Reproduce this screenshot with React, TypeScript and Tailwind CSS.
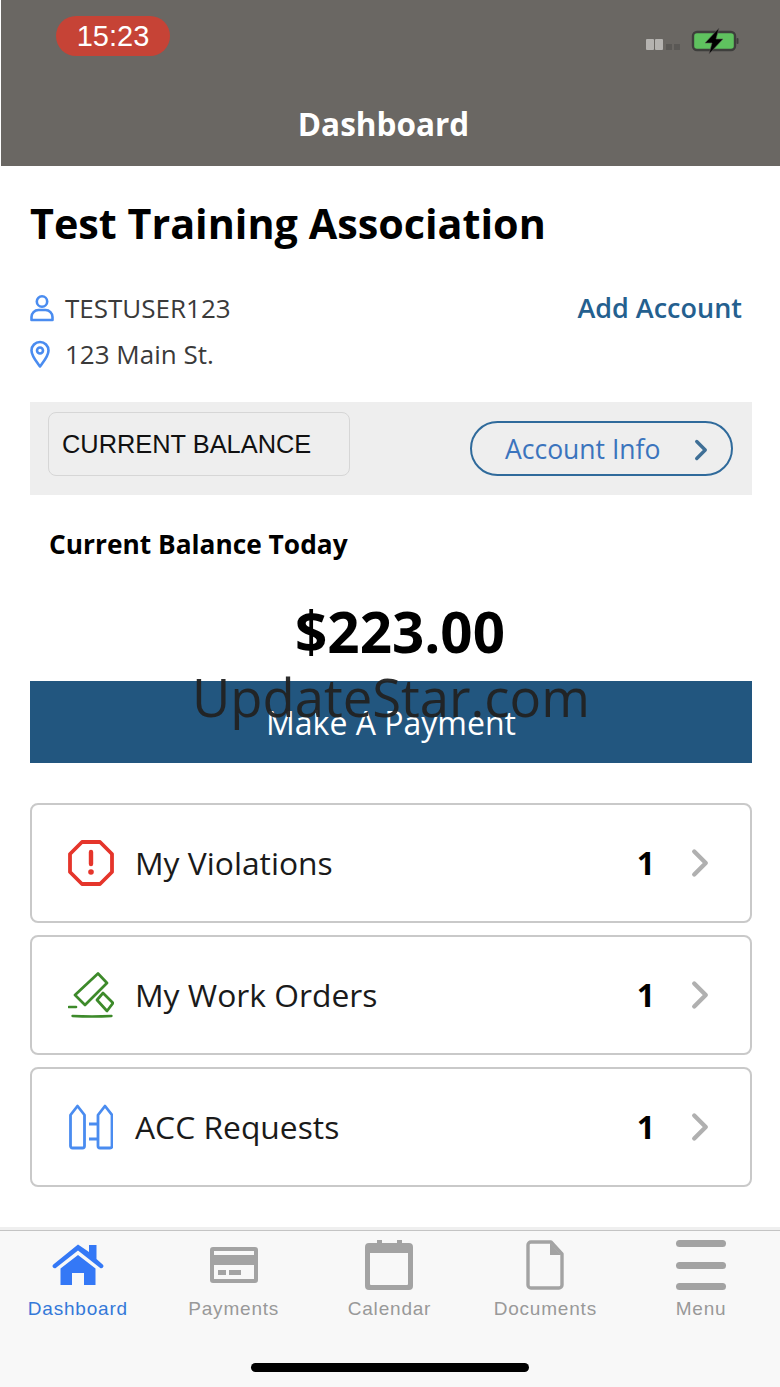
import { ChevronRight } from "lucide-react";

const openSans = "font-['Open_Sans',sans-serif]";

function UserIcon() {
  return (
    <svg width="24" height="28" viewBox="0 0 24 28" fill="none" stroke="#4a8cf0" strokeWidth="2.6">
      <circle cx="12" cy="7.5" r="5.2" />
      <path d="M1.5 26v-3a7 7 0 0 1 7-7h7a7 7 0 0 1 7 7v3z" strokeLinejoin="round" />
    </svg>
  );
}

function PinIcon() {
  return (
    <svg width="20" height="28" viewBox="0 0 20 28" fill="none" stroke="#4a8cf0" strokeWidth="2.6">
      <path d="M10 26.5C6 21 1.5 16 1.5 10.5a8.5 8.5 0 0 1 17 0C18.5 16 14 21 10 26.5z" strokeLinejoin="round" />
      <circle cx="10" cy="10.5" r="3" />
    </svg>
  );
}

function OctagonIcon() {
  return (
    <svg width="46" height="46" viewBox="0 0 46 46" fill="none">
      <path d="M14 2h18l12 12v18L32 44H14L2 32V14z" stroke="#e5352b" strokeWidth="3.8" strokeLinejoin="round" />
      <path d="M23 12v12" stroke="#e5352b" strokeWidth="4.4" strokeLinecap="round" />
      <circle cx="23" cy="32" r="2.8" fill="#e5352b" />
    </svg>
  );
}

function GavelIcon() {
  return (
    <svg width="46" height="46" viewBox="0 0 46 46" fill="none" stroke="#3d8a2a" strokeWidth="2.7" strokeLinejoin="round">
      <path d="M30 1.500l9 9.500-22 22-10-10z" />
      <path d="M29 28l6-7 10 10-6 8z" />
      <path d="M1 35h7" strokeLinecap="round" strokeWidth="2.600" />
      <path d="M4.500 44q19.500 1 39 0" strokeWidth="2.400" strokeLinecap="round" />
    </svg>
  );
}

function FenceIcon() {
  return (
    <svg width="44" height="46" viewBox="0 0 44 46" fill="none" stroke="#4a8cf0" strokeWidth="2.8" strokeLinejoin="round">
      <path d="M1.500 11L8.500 2l7 9v31a2 2 0 0 1-2 2h-10a2 2 0 0 1-2-2z" />
      <path d="M29 11l7-9 7 9v31a2 2 0 0 1-2 2H31a2 2 0 0 1-2-2z" />
      <path d="M20 20h9M20 35h9" />
    </svg>
  );
}

function HomeIcon() {
  return (
    <svg width="52" height="42" viewBox="0 0 52 42" fill="#3478f6">
      <path d="M26 .500L37 8V1h7.500v14l6.200 5.400c1 .9 1 2.200.2 3.100-.8.900-2 1-3 .2L26 6.500 4.100 23.700c-1 .8-2.200.7-3-.2-.8-.9-.8-2.200.2-3.100z" />
      <path d="M26 11L43.500 24.500V41H32V29H20v12H8.500V24.500z" />
    </svg>
  );
}

function CardIcon() {
  return (
    <svg width="48" height="36" viewBox="0 0 48 36" fill="#a3a3a3">
      <path fillRule="evenodd" d="M3 0h42a3 3 0 0 1 3 3v30a3 3 0 0 1-3 3H3a3 3 0 0 1-3-3V3a3 3 0 0 1 3-3zM4 4v4h40V4zM4 18v14h40V18z" />
      <rect x="8" y="23" width="8" height="5" />
      <rect x="19" y="23" width="12" height="5" />
    </svg>
  );
}

function CalendarIcon() {
  return (
    <svg width="48" height="50" viewBox="0 0 48 50" fill="#a3a3a3">
      <path fillRule="evenodd" d="M4 3h8V0h5v3h15V0h5v3h7a4 4 0 0 1 4 4v39a4 4 0 0 1-4 4H4a4 4 0 0 1-4-4V7a4 4 0 0 1 4-4zM5 13v31a1 1 0 0 0 1 1h36a1 1 0 0 0 1-1V13z" />
    </svg>
  );
}

function DocIcon() {
  return (
    <svg width="38" height="50" viewBox="0 0 38 50" fill="none">
      <path d="M5 2h20l11 12v31a3 3 0 0 1-3 3H5a3 3 0 0 1-3-3V5a3 3 0 0 1 3-3z" stroke="#a3a3a3" strokeWidth="3.400" strokeLinejoin="round" />
      <path d="M24 3v12h11z" fill="#a3a3a3" />
    </svg>
  );
}

function MenuIcon() {
  return (
    <div className="flex h-[50px] w-[50px] flex-col justify-between">
      <div className="h-[7px] rounded-full bg-[#a3a3a3]" />
      <div className="h-[7px] rounded-full bg-[#a3a3a3]" />
      <div className="h-[7px] rounded-full bg-[#a3a3a3]" />
    </div>
  );
}

function BatteryIcon() {
  return (
    <svg width="50" height="26" viewBox="0 0 50 26" fill="none">
      <rect x="2" y="4" width="42" height="18" rx="4" fill="#5fc25f" stroke="#3e3e3c" strokeWidth="2.400" />
      <rect x="45.500" y="10" width="2" height="6" rx="1" fill="#3e3e3c" />
      <path d="M28 0L14 15h7l-3 11 14-15h-7z" fill="#000" stroke="#5a5855" strokeWidth=".6" />
    </svg>
  );
}

const rows = [
  { label: "My Violations", count: 1, icon: <OctagonIcon /> },
  { label: "My Work Orders", count: 1, icon: <GavelIcon /> },
  { label: "ACC Requests", count: 1, icon: <FenceIcon /> },
];

const tabs = [
  { label: "Dashboard", icon: <HomeIcon />, active: true },
  { label: "Payments", icon: <CardIcon />, active: false },
  { label: "Calendar", icon: <CalendarIcon />, active: false },
  { label: "Documents", icon: <DocIcon />, active: false },
  { label: "Menu", icon: <MenuIcon />, active: false },
];

export default function App() {
  return (
    <div className={`flex h-[1387px] w-[780px] flex-col overflow-hidden bg-white ${openSans}`}>
      {/* Nav bar */}
      <div className="ml-px h-[166px] shrink-0 bg-[#6a6763] pt-4 pl-[55px]">
        <div className="flex items-start justify-between pr-[39px]">
          <div className="flex h-10 w-[114px] items-center justify-center rounded-[20px] bg-[#c64336] font-['Liberation_Sans',sans-serif] text-[29px] leading-none text-white">
            15:23
          </div>
          <div className="mt-3 flex items-center gap-[11px]">
            <div className="mt-[6px] flex items-center gap-px">
              <div className="h-[11px] w-[8px] rounded-[1px] bg-[#b5b3b0]" />
              <div className="h-[11px] w-[8px] rounded-[1px] bg-[#b5b3b0]" />
              <div className="ml-[2px] h-[6px] w-[6px] self-end bg-[#5a5855]" />
              <div className="ml-px h-[6px] w-[6px] self-end bg-[#5a5855]" />
            </div>
            <BatteryIcon />
          </div>
        </div>
        <div className="mt-[48px] pr-[69px] text-center text-[31.500px] leading-10 font-bold text-white">Dashboard</div>
      </div>

      <main className="min-h-0 flex-1 pr-7 pl-[30px]">
        <h1 className="mt-[29px] text-[41.300px] leading-[56px] font-bold text-black">Test Training Association</h1>

        <div className="mt-[39px] flex items-center justify-between pr-2.5">
          <div className="flex items-center gap-[11px]">
            <UserIcon />
            <span className="text-[26px] leading-9 text-[#3a3a3a]">TESTUSER123</span>
          </div>
          <span className="text-[27px] leading-9 font-semibold text-[#24608f]">Add Account</span>
        </div>
        <div className="mt-2.5 flex items-center gap-[15px]">
          <PinIcon />
          <span className="text-[26px] leading-9 text-[#3a3a3a]">123 Main St.</span>
        </div>

        {/* Balance tabs */}
        <div className="mt-[30px] flex h-[93px] items-start justify-between bg-[#eeeeee] pr-[19px] pl-[18px]">
          <div className="mt-2.5 flex h-16 w-[302px] items-center rounded-lg border border-[#d6d6d6] pl-[13px] font-['Liberation_Sans',sans-serif] text-[25.400px] text-[#111111]">
            CURRENT BALANCE
          </div>
          <div className="mt-[19px] flex h-[55px] w-[263px] items-center justify-between rounded-full border-2 border-[#2f6a9b] pr-[13px] pl-[33px]">
            <span className="mt-[2px] text-[26.500px] text-[#3b74bd]">Account Info</span>
            <ChevronRight size={34} strokeWidth={2.4} className="mt-[2px] text-[#3f6f96]" />
          </div>
        </div>

        <div className="mt-[31px] pl-[19px] text-[26.300px] leading-9 font-bold text-black">Current Balance Today</div>

        <div className="mt-8 h-[76px] pl-[18px] text-center text-[56.500px] leading-[76px] font-bold text-black">$223.00</div>

        <div className="relative mt-[11px] flex h-[82px] items-center justify-center bg-[#22567f] text-[32px] font-normal text-white">
          <span className="mt-[2px]">Make A Payment</span>
          {/* Watermark over the page */}
          <span className="absolute top-[-19px] left-[162px] text-[52.600px] leading-[70px] text-[#222222]/95">UpdateStar.com</span>
        </div>

        <div className="mt-10 flex flex-col gap-3">
          {rows.map((row) => (
            <div key={row.label} className="flex h-[120px] items-center rounded-lg border-2 border-[#c9c9c9] pr-[36px] pl-[36px]">
              <div className="flex w-[46px] justify-center">{row.icon}</div>
              <span className="ml-[21px] flex-1 text-[31.800px] text-[#1a1a1a]">{row.label}</span>
              <span className="mr-[22px] text-[32px] font-bold text-black">{row.count}</span>
              <ChevronRight size={46} strokeWidth={2.3} className="mr-[-9px] text-[#b0b0b0]" />
            </div>
          ))}
        </div>
      </main>

      {/* Tab bar */}
      <div className="h-[3px] shrink-0 bg-[#efefef]" />
      <nav className="relative h-[157px] shrink-0 border-t border-[#c4c4c4] bg-[#f8f8f8]">
        <div className="grid grid-cols-5 pt-[9px] pr-px">
          {tabs.map((tab) => (
            <div key={tab.label} className="flex flex-col items-center">
              <div className="flex h-[50px] items-center justify-center">{tab.icon}</div>
              <span
                className={`mt-[8px] font-['Liberation_Sans',sans-serif] text-[19px] leading-[22px] tracking-[0.8px] ${
                  tab.active ? "text-[#3478d8]" : "text-[#999999]"
                }`}
              >
                {tab.label}
              </span>
            </div>
          ))}
        </div>
        <div className="absolute top-[132px] left-[251px] h-[9px] w-[278px] rounded-full bg-black" />
      </nav>
    </div>
  );
}
